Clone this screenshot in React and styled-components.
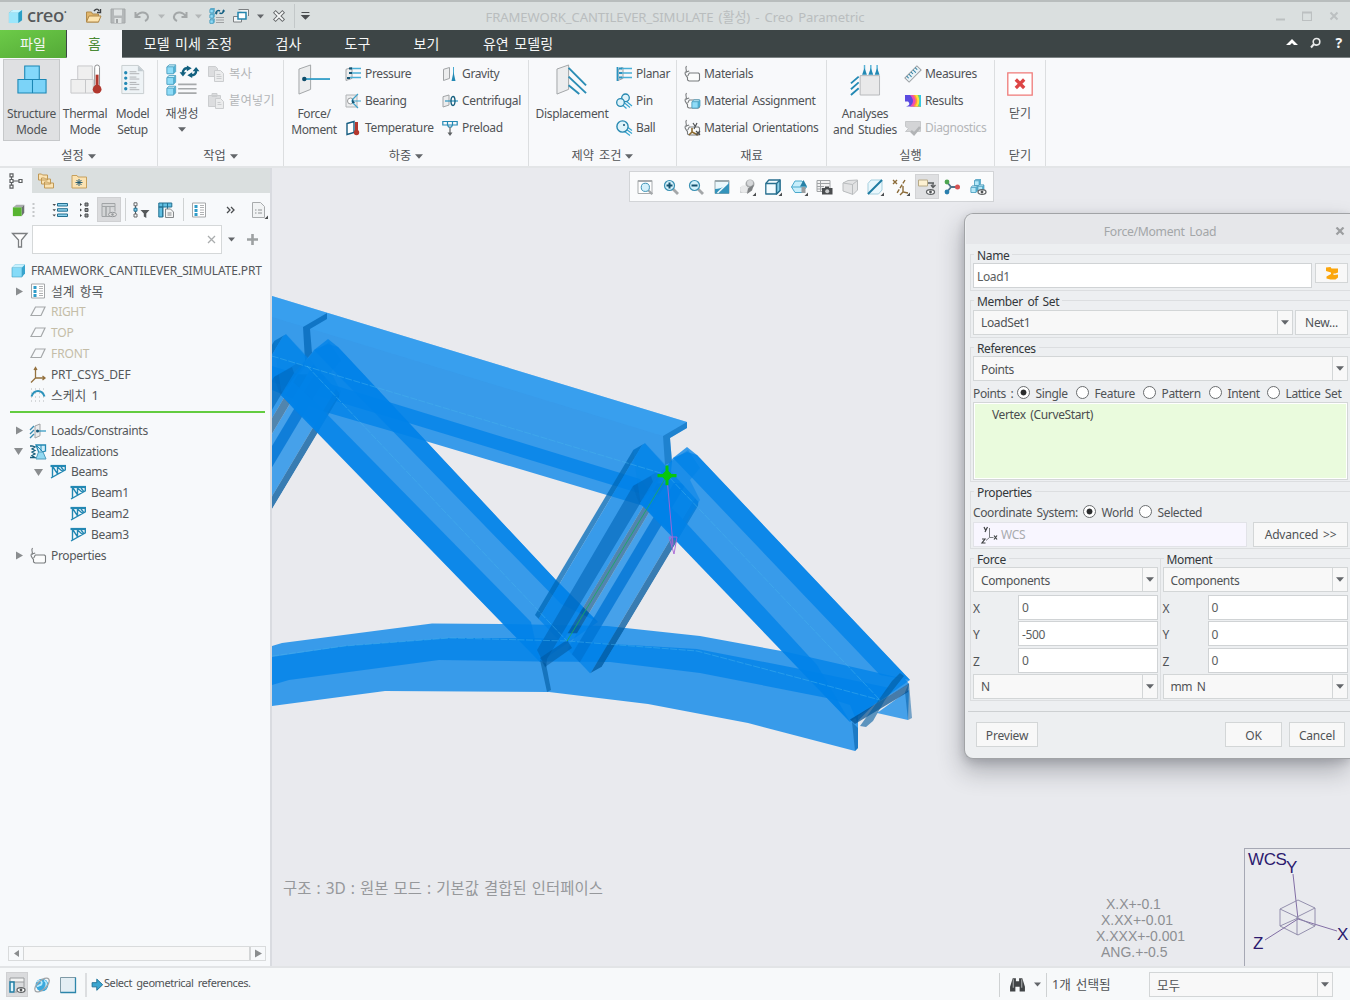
import React from "react";
import styled, { createGlobalStyle, css } from "styled-components";

const Global = createGlobalStyle`
  * { box-sizing: border-box; }
  body { margin: 0; overflow: hidden; background: #f8f9fb; }
  #root {
    font-family: "Noto Sans", "Noto Sans CJK KR", sans-serif;
    font-size: 12px; line-height: 16px; letter-spacing: -0.36px; word-spacing: 1.8px; color: #505356;
    white-space: nowrap;
  }
`;

const Window = styled.div`
  width: 1350px; height: 1000px; overflow: hidden;
  display: flex; flex-direction: column;
`;

/* ---------- title bar ---------- */
const TitleBar = styled.header`
  height: 30px; flex: none; background: #dadfdf; border-top: 2px solid #b8bdbd;
  display: grid; grid-template-columns: 320px 710px 1fr; align-items: center;
`;
const QuickAccess = styled.div`display: flex; align-items: center; padding-left: 8px; height: 28px;`;
const Brand = styled.span`
  font-family: "Noto Sans", sans-serif; font-size: 18.5px; line-height: 24px; letter-spacing: -0.4px; color: #55585a;
  font-weight: 500; width: 57px; margin-left: 4px; display: flex; margin-top: -3px;
`;
const Reg = styled.span`font-size: 7px; line-height: 20px;`;
const TitleText = styled.div`text-align: center; color: #b9bdbe; font-size: 13.1px; letter-spacing: -0.08px; padding-top: 2px;`;
const WindowButtons = styled.div`display: flex; justify-content: flex-end; gap: 17px; padding-right: 11px;`;
const Slot = styled.span`display: flex; flex: none; width: ${p => p.$w}px; justify-content: ${p => p.$start ? "flex-start" : "center"}; align-items: center;`;

/* ---------- tabs ---------- */
const TabBar = styled.nav`
  height: 28px; flex: none; background: #3d4546; border-bottom: 1px solid #7d8384;
  display: flex; color: #f6f7f7; font-size: 14px; letter-spacing: 0.1px; word-spacing: 1.6px;
`;
const Tab = styled.div`
  width: ${p => p.$w}px; display: flex; align-items: center; justify-content: center; height: 28px;
  ${p => p.$kind === "file" && css`background: linear-gradient(160deg, #6ccb48, #54a937); margin-right: 1px;`}
  ${p => p.$kind === "active" && css`background: #f8f9fb; color: #4b8a36;`}
`;
const TabTools = styled.div`margin-left: auto; display: flex; gap: 11px; align-items: center; padding-right: 5px; height: 26px;`;

/* ---------- ribbon ---------- */
const Ribbon = styled.section`
  height: 110px; flex: none; background: #f8f9fb; border-bottom: 2px solid #e3e5e7; display: flex;
`;
const Group = styled.div`
  width: ${p => p.$w}px; margin: 2px 0 1px; height: 106px;
  border-right: 1px solid #dcdee0; display: flex; flex-direction: column;
`;
const GroupBody = styled.div`display: flex; height: 87px; padding-left: ${p => p.$pad}px; margin-top: -1px;`;
const GroupLabel = styled.div`
  font-size: 12.200px; display: flex; justify-content: center; align-items: center; gap: 4px; height: 20px; letter-spacing: 0;
`;
const Big = styled.div`
  width: ${p => p.$w}px; height: 82px; padding-top: ${p => p.$top || 4}px; flex: none;
  display: flex; flex-direction: column; align-items: center; text-align: center;
  border: 1px solid transparent; margin-right: ${p => p.$mr || 0}px;
  ${p => p.$active && css`background: #dfe0e2; border-color: #c6c8ca;`}
`;
const BigLabel = styled.div`
  margin-top: ${p => p.$ko ? 11 : 9.6}px; letter-spacing: ${p => p.$ko ? "0" : "-0.36px"}; line-height: ${p => p.$ko ? 14 : 16}px;
`;
const SmallCol = styled.div`display: flex; flex-direction: column; width: ${p => p.$w}px; flex: none;`;
const Small = styled.div`
  height: 27.2px; display: flex; align-items: center; gap: ${p => p.$ko ? 5 : 4}px; padding-top: 2px;
  color: ${p => p.$off ? "#b4b6b8" : "#505356"}; font-size: ${p => p.$ko ? 12.4 : 12}px; letter-spacing: ${p => p.$ko ? 0 : -0.36}px;
`;

/* ---------- workspace ---------- */
const Workspace = styled.main`display: flex; flex: none; height: 798px;`;
const Side = styled.aside`
  width: 272px; flex: none; background: #f7f9fb; border-right: 2px solid #d9dbe0;
  display: flex; flex-direction: column;
`;
const SideTabs = styled.div`height: 25px; display: flex; background: #dadfdf;`;
const SideTab = styled.div`
  width: ${p => p.$w || 32}px; height: 26px; display: flex; align-items: center; justify-content: center;
  background: ${p => p.$active ? "#f7f9fb" : "transparent"};
`;
const SideTools = styled.div`height: 32px; padding: 1px 8px 0 11px; display: flex; align-items: center;`;
const Pressed = styled.span`
  display: flex; align-items: center; justify-content: center; width: ${p => p.$w || 24}px; height: 25px; background: #dadbdd;
  border: 1px solid #cfd0d2; flex: none;
`;
const VLine = styled.span`width: ${p => p.$t || 1}px; height: ${p => p.$h}px; background: ${p => p.$c || "#cfd2d3"}; flex: none; margin: 0 ${p => p.$m || 0}px;`;
const FilterRow = styled.div`height: 29px; padding-left: 11px; display: flex; align-items: center;`;
const FilterInput = styled.div`
  width: 190px; height: 29px; margin: 0 6px 0 4px; background: #fff; border: 1px solid #d5d8d9;
  display: flex; align-items: center; justify-content: flex-end; padding-right: 5px;
`;
const Tree = styled.div`padding-top: 6.2px; flex: 1;`;
const Row = styled.div`
  height: 20.8px; display: flex; align-items: center; padding-left: ${p => p.$x}px;
  color: ${p => p.$dim ? "#c4bda8" : "#54575a"};
  font-size: ${p => p.$ko ? 12.8 : 12}px; letter-spacing: ${p => p.$ko ? 0 : p.$ls || -0.32}px;
`;
const Insert = styled.div`height: 3px; margin: 5.4px 5px 6.200px 10px; background: #63cc40; border: solid #f7f9fb; border-width: 0 0 1px; flex: none;`;
const HScroll = styled.div`display: flex; height: 15px; margin: 0 4px 5px 8px; border: 1px solid #d9dbdc;`;
const ScrollBtn = styled.div`width: 14px; display: flex; align-items: center; justify-content: center;`;
const Thumb = styled.div`flex: 1; background: #f8f8f8; border: solid #d3d5d6; border-width: 0 2px 0 1px;`;

const Canvas = styled.section`
  position: relative; flex: 1; overflow: hidden; background: #e9eaee;
`;
const Scene = styled.svg`position: absolute; left: 0; top: 0;`;
const ViewBar = styled.div`
  position: absolute; left: 357px; top: 3px; width: 365px; height: 31px; background: #fafbfc;
  border: 1px solid #d2d4d7; display: flex; align-items: center; padding-left: 3px;
`;
const ViewBtn = styled.span`
  width: 24px; height: 25px; margin-right: 1.62px; flex: none; display: flex; align-items: center; justify-content: center;
  ${p => p.$active && css`background: #dfe0e2; border: 1px solid #d2d3d5;`}
`;
const ModeText = styled.div`position: absolute; left: 11px; top: 711px; font-size: 15.4px; line-height: 20px; color: #96989b; letter-spacing: 0.12px; word-spacing: 0.8px;`;
const Tolerance = styled.div`
  position: absolute; left: 824px; top: 728px; display: flex; flex-direction: column;
  font: 14px/16px "Liberation Sans", sans-serif; letter-spacing: 0; color: #8d8f93;
`;
const ToleranceRow = styled.span`padding-left: ${p => p.$pad}px;`;
const Compass = styled.div`
  position: absolute; right: 0; bottom: 0; width: 106px; height: 118px; border: solid #a6a8b4; border-width: 1px 0 0 1px;
`;

/* ---------- dialog ---------- */
const Dialog = styled.div`
  position: absolute; left: 692px; top: 45px; width: 386px; height: 546px; background: #edeff1;
  border: 1px solid #a1a3a6; border-right: 0; border-radius: 9px 0 0 9px; display: flex; flex-direction: column;
  box-shadow: -2px 12px 24px rgba(30,34,44,.3), 0 3px 8px rgba(30,34,44,.16);
`;
const DialogTitle = styled.div`
  height: 30px; padding: 5px 3px 0 19px; background: #e6e7ea; border-top-left-radius: 8px; color: #a3a6a8; font-size: 12.2px; letter-spacing: -0.3px;
  display: grid; grid-template-columns: 1fr 12px; align-items: center; text-align: center; margin: 0 0 3px 1px;
`;
const Section = styled.fieldset`
  margin: 0 0 2px ${p => p.$ml ?? 5}px; padding: 2px 2px 0; height: ${p => p.$h}px; width: ${p => p.$w || "auto"}; min-width: 0;
  border: 1px solid #dcdee0; border-right: ${p => p.$r ? "1px solid #cfd1d3" : 0};
  legend { line-height: 14px; height: 14px; padding: 2px 3px 0; margin-left: 1px; color: #33373a; }
`;
const Line = styled.div`display: flex; align-items: ${p => p.$a || "center"}; height: ${p => p.$h}px; gap: ${p => p.$gap || 0}px; padding-top: ${p => p.$pt || 0}px;`;
const Input = styled.div`
  width: ${p => p.$w}px; height: 25px; background: ${p => p.$wcs ? "#f8f6ff" : "#fff"}; flex: none;
  border: 1px solid ${p => p.$wcs ? "#e2e3e8" : "#d0d3d5"}; display: flex; align-items: center; padding: 2px 0 0 3px;
  color: ${p => p.$wcs ? "#a8abae" : "#5b5e60"};
`;
const ComboBox = styled.div`
  width: ${p => p.$w}px; height: 25px; background: #f8f8f8; border: 1px solid #d3d6d7; display: flex; align-items: center; flex: none;
  & > span { flex: 1; padding: 2px 0 0 7px; }
  & > i { width: 15px; height: 23px; border-left: 1px solid #d3d6d7; display: flex; align-items: center; justify-content: center; }
`;
const Combo = ({ w, children }) => <ComboBox $w={w}><span>{children}</span><i><Caret /></i></ComboBox>;
const Button = styled.div`
  width: ${p => p.$w}px; height: ${p => p.$h || 25}px; background: #f8f8f8; border: 1px solid #d3d6d7; flex: none;
  display: flex; align-items: center; justify-content: center; letter-spacing: -0.2px; padding-top: ${p => p.$h ? 0 : 2}px;
`;
const Radio = styled.span`
  width: 13px; height: 13px; border-radius: 50%; border: 1px solid #6a6d6f; flex: none; margin-top: -3px;
  background: ${p => p.$on ? "radial-gradient(circle, #2b2d2e 0 2.6px, #fff 3.3px)" : "#fff"};
`;
const RadioText = styled.span`width: ${p => p.$w}px; padding-left: 6px; flex: none;`;
const Label = styled.span`width: ${p => p.$w}px; flex: none;`;
const List = styled.div`
  width: 375px; height: 78px; background: #eafbdd; border: 1px solid #d3d6d7; outline: 1px solid #fff; outline-offset: -2px;
  padding: 4px 0 0 18px; color: #4a4d4f;
`;
const Two = styled.div`display: flex;`;
const AxisName = styled.span`width: 45px; flex: none; padding-top: 3px;`;
const Footer = styled.div`
  border-top: 1px solid #cdd0d2; margin: 8px 0 0 3px; padding: 10px 5px 0 8px; display: flex; gap: 7px;
  & > :first-child { margin-right: auto; }
`;

/* ---------- status bar ---------- */
const Status = styled.footer`
  height: 34px; flex: none; background: #f7f9fa; border-top: 2px solid #e2e4e6; display: flex; align-items: center; padding: 1px 0 0 6px;
`;
const StatusMsg = styled.span`width: 893px; margin-bottom: 3px; font-size: 11px; letter-spacing: -0.42px; word-spacing: 1.8px;`;
const KoText = styled.span`font-size: 12.6px; letter-spacing: 0; width: ${p => p.$w}px; padding-left: ${p => p.$pad || 0}px;`;

/* ---------- drawings ---------- */
const Caret = ({ c = "#63666a", w = 8 }) => <svg width={w} height="5" viewBox="0 0 8 5"><path d="M0 .3h8L4 4.7z" fill={c} /></svg>;
const Tri = ({ open, left }) => (
  <svg width="9" height="9" viewBox="0 0 9 9"><path fill="#8a8d8f" d={open ? "M0 1h9L4.500 8z" : left ? "M7 1v7L2 4.500z" : "M1 .5v8l7-4z"} /></svg>
);
const plate = (x, y, w, h) => <path d={`M${x} ${y + h * .14}L${x + w} ${y}V${y + h * .84}L${x} ${y + h}z`} fill="#ecedee" stroke="#a1a4a6" />;
const cube = (x, y, s, f = "#8fdcf8", t = "#d4f4fd", st = "#4a9ebf") => (
  <g stroke={st} strokeLinejoin="round" strokeWidth=".7">
    <path d={`M${x} ${y + s * .22}l${s * .24} ${-s * .22}h${s * .76}v${s * .76}l${-s * .24} ${s * .24}h${-s * .76}z`} fill="#4fb4d8" />
    <path d={`M${x} ${y + s * .22}l${s * .24} ${-s * .22}h${s * .76}l${-s * .24} ${s * .22}z`} fill={t} />
    <path d={`M${x} ${y + s * .22}h${s * .76}v${s * .78}h${-s * .76}z`} fill={f} />
  </g>
);
const truss = <g fill="none" stroke="#2388b3"><path d="M.5 2h15.500" strokeWidth="2.200" /><path d="M2.500 2v11M15.300 2v3.800L1 14M3 3l4.500 6.800M7.500 10V3l5 4.500M11 3l2.500 3" strokeWidth="1.400" /></g>;
const sheet = <g><path d="M1.500 1h13v14h-13z" fill="#fff" stroke="#a4a7a9" /><path d="M3.500 3h3v3h-3zM3.500 7h3v3h-3zM3.500 11h3v3h-3z" fill="#2f9cc9" /><path d="M9 3.500h4M9 5.500h4M9 8h4M9 10.500h4M9 12.500h4" stroke="#b0b2b4" /></g>;
const lens = (s) => <g><path d="M10 10l5 5" stroke="#a4a7a9" strokeWidth="2.800" /><circle cx="6.500" cy="6.500" r="5" fill="#d4f1fb" stroke="#3990b3" strokeWidth="1.200" />{s && <path d={s} stroke="#14516e" strokeWidth="2" />}</g>;
const tag = <g fill="none" stroke="#797c7e" strokeWidth="1.100"><path d="M2.500 0C.5 3 3.500 3.500 2 6.500" /><path d="M.7 6.500l4.500-1.500" /><path d="M1 7c0 2 1.500 3 2.500 4.500v2.500l1.500 1h9.500l1-1V8l-1-1H5.500C4.500 7.500 5 9 3.500 10" fill="#fbfcfc" /></g>;
const eye = (x, y) => <g><ellipse cx={x} cy={y} rx="4" ry="2.400" fill="#fff" stroke="#606365" strokeWidth="1.300" /><circle cx={x} cy={y} r="1.400" fill="#505355" /></g>;
const flags = <g stroke="#49afd6" strokeWidth="1.300"><path d="M5 2.500h11M5 7h11M5 11.500h11" /></g>;
const corner = <path d="M17 13.500v3.500h-3.500z" fill="#4a4d4f" stroke="none" />;

const art = {
  logo: <g><path d="M1 4l4-3h10v11l-4 3H1z" fill="#2b9fc6" /><path d="M1 4h10v11H1z" fill="#9be6fb" /><path d="M1 4l4-3h10l-4 3z" fill="#c8f4ff" /></g>,
  folder: <g><path d="M1.500 14V4h5l1 2h6v8z" fill="#e1b66b" stroke="#b0894a" /><path d="M1.500 14L4 8h12l-2.500 6z" fill="#fde4ae" stroke="#b0894a" /><path d="M9 3c2-2.500 4-2.500 5 0m1.500-2v3.500H12" fill="none" stroke="#3e4143" strokeWidth="1.400" /></g>,
  save: <g><path d="M1 1h14v14H1z" fill="#b4b8b9" stroke="#a4a8a9" /><path d="M4 1.500h8v6H4z" fill="#dfe3e3" /><path d="M4.500 10h7v5h-7z" fill="#dfe3e3" /><path d="M6 11h2v4H6z" fill="#a0a4a5" /></g>,
  undo: <path d="M1.500 4v5h5M2 8.500C5 4 11 3 13.500 7c1.500 3-.5 5-2.500 6" fill="none" stroke="#a3a7a8" strokeWidth="2" />,
  redo: <path d="M14.500 4v5h-5M14 8.500C11 4 5 3 2.500 7 1 10 3 12 5 13" fill="none" stroke="#a3a7a8" strokeWidth="2" />,
  regen: <g>{cube(1, .5, 4.300)}{cube(1, 5.700, 4.300)}{cube(1, 11, 4.300)}<path d="M7 5.500c0-2.500 2-3.500 4-2.500M14.500 2.500c0 2.500-2 3.500-4 2.500" fill="none" stroke="#125f82" strokeWidth="1.500" /><path d="M5.500 4.500h3.500l-1.700 2.200zM13 3.500h3.200L14.700 1.200z" fill="#125f82" /><path d="M7 9.500h8M7 12h8M7 14.500h8" stroke="#9da0a2" strokeWidth="1.200" /></g>,
  windows: <g fill="#f2f5f6" stroke="#7d8082"><path d="M.5 8.500h8v5.500h-8zM5.500 1.500h10V8" /><path d="M5 4.500h8v6.500H5z" fill="#fff" stroke="#2386ae" strokeWidth="1.500" /></g>,
  closeWin: <g fill="none"><path d="M3.500 3.500l9 9M12.500 3.500l-9 9" stroke="#66696b" strokeWidth="5" strokeLinecap="square" /><path d="M3.500 3.500l9 9M12.500 3.500l-9 9" stroke="#f6f8f8" strokeWidth="2.600" strokeLinecap="square" /></g>,
  more: <path d="M4 4h9M4.500 7.500h8l-4 4z" stroke="#4a4d4f" fill="#4a4d4f" strokeWidth="1.200" />,
  structure: <g stroke="#1b86b4" strokeWidth="1.100"><path d="M9 2h15v14H9z" fill="#83d8fa" /><path d="M2 16h15v14H2zM17 16h14v14H17z" fill="#7bd3f8" /></g>,
  thermal: <g><path d="M9 2h15v14H9zM2 16h15v14H2zM17 16h8v14h-8z" fill="#efefef" stroke="#c6c7c9" /><rect x="26.500" y="1" width="5" height="23" rx="2.500" fill="#fff" stroke="#8b8d8f" /><path d="M27.500 11h3v13h-3z" fill="#b1372d" /><circle cx="29" cy="26" r="4.500" fill="#b1372d" /></g>,
  setup: <g><path d="M5 1.500h17l5.500 5.500v23.500H5z" fill="#eef3f6" stroke="#c8cdd0" /><path d="M21.500 1.500v6h6" fill="#c2cbd0" />{[8, 13.500, 19, 24.500].map(y => <g key={y}><circle cx="9" cy={y + 1} r="1.700" fill="#2389b5" /><path d={`M13 ${y}h7M13 ${y + 2}h10`} stroke="#adb1b4" /></g>)}</g>,
  regenBig: <g>{cube(1, 1, 9)}{cube(1, 12, 9)}{cube(1, 23, 9)}<path d="M17.500 10c-.5-4 2-6 5-5.500M31 6c.5 4-2 6-5 5.500" fill="none" stroke="#12607f" strokeWidth="2.400" /><path d="M14 8.500h7l-3.500 4.500zM27.500 7.500h7L31 3zM21.500 1.500l5 3-5 3zM27 8.500l-5 3 5 3z" fill="#12607f" /><path d="M12.500 21h19M12.500 25.500h19M12.500 30h19" stroke="#a6a9ab" strokeWidth="1.700" /></g>,
  copy: <g fill="#dcdddf" stroke="#cbcdcf"><path d="M.5.500h7l2 2v8h-9z" /><path d="M6.500 4.500h6l3 3v8h-9z" fill="#ebeced" /><path d="M8.500 8.500h4M8.500 10.500h5M8.500 12.500h5" /></g>,
  paste: <g fill="#dcdddf" stroke="#cbcdcf"><path d="M.5 2.500h12v11H.5zM4 .5h5v3H4z" /><path d="M7.500 5.500h5l3 3v7h-8z" fill="#ebeced" /><path d="M9.500 9.500h3M9.500 11.500h4" /></g>,
  force: <g>{plate(1, 1, 12, 30)}<path d="M6 15.500h27" stroke="#2c9bc6" strokeWidth="1.800" /><circle cx="6.500" cy="15.500" r="2.300" fill="#0f4d6b" /></g>,
  pressure: <g>{plate(1, 1.500, 6, 13)}{flags}<path d="M4 2.500h3M4 7h3M2 12h3" stroke="#155574" strokeWidth="2.200" /></g>,
  bearing: <g><path d="M1 2h11v12H1z" fill="#ecedee" stroke="#b1b4b6" /><circle cx="5.500" cy="8" r="3" fill="#fff" stroke="#97999b" /><path d="M6 8h10M7 7l6-6M7 9l6 6" stroke="#3fa3cb" strokeWidth="1.200" /><path d="M7 6v4h3z" fill="#155574" /></g>,
  temperature: <g><path d="M2 3.500l7-2v11l-7 2z" fill="#fff" stroke="#175e82" strokeWidth="1.400" /><path d="M10 2h3v10h-3z" fill="#b4382e" /><circle cx="11.500" cy="12.500" r="2.700" fill="#b4382e" /></g>,
  gravity: <g>{plate(1.500, 1.500, 6, 13)}<path d="M11.500 1v12" stroke="#46aad0" /><path d="M9.500 15l2-9 2 9z" fill="#2389b4" /></g>,
  centrifugal: <g>{plate(1, 2, 6, 12)}<path d="M3 8h13" stroke="#2994c0" strokeWidth="1.200" /><ellipse cx="11" cy="8" rx="2" ry="4.500" fill="none" stroke="#17607f" strokeWidth="1.400" /></g>,
  preload: <g fill="none" stroke="#2389b4" strokeWidth="1.200"><path d="M.8 1.500h14.400v3.500H.8zM5.500 1.500V5M10.500 1.500V5M5.500 5l1 2h3l1-2" /><path d="M8 7v7" stroke="#5e6163" /><path d="M5.500 12.500h5L8 16z" fill="#5e6163" stroke="none" /></g>,
  displacement: <g>{plate(1, 1, 12, 30)}<path d="M13 4l18 18M13 13l18 17M13 22l11 9" stroke="#2b8db5" strokeWidth="2" /></g>,
  planar: <g>{plate(2, 1.500, 5, 13)}{flags}<path d="M1.500 1v14M3 2.500h3M3 7h3M3 11.500h3" stroke="#2a93c0" strokeWidth="1.800" /></g>,
  pin: <g><path d="M8 9.500l6 5M10 8l6 5M6.500 12l4 3.500" stroke="#37a5d0" strokeWidth="1.200" /><circle cx="9.500" cy="4.800" r="3.800" fill="#dff3fa" stroke="#2789b1" strokeWidth="1.300" /><circle cx="4.500" cy="9.500" r="3.800" fill="#dff3fa" stroke="#2789b1" strokeWidth="1.300" /></g>,
  ball: <g><path d="M8 11l6 4.500M10.500 9.500l5.500 4M12 7.500l4 3" stroke="#37a5d0" strokeWidth="1.200" /><circle cx="6.500" cy="6.500" r="5.600" fill="#dff3fa" stroke="#2789b1" strokeWidth="1.400" /><circle cx="8" cy="5" r="1" fill="#155574" /></g>,
  tag,
  tagAssign: <g>{tag}{cube(8, 7, 8)}</g>,
  tagOrient: <g>{tag}<path d="M8 8v4l-3 3M8 12l6 3" fill="none" stroke="#8c6a2f" strokeWidth="1.600" /><path d="M9 3l2 3M13 3l-3 6M12 11l4 4M16 11l-4 4" stroke="#4e5153" strokeWidth="1.200" /></g>,
  analyses: <g><path d="M11.500 12h20v20h-20z" fill="#e9e9ea" stroke="#b6b8ba" /><path d="M16 1v9M22.500 1v9M29 1v9" stroke="#58b2d5" strokeWidth="1.500" /><path d="M13.500 11l2.500-7 2.500 7zM20 11l2.500-7 2.500 7zM26.500 11l2.500-7 2.500 7z" fill="#2389b4" /><path d="M2 20l8-7M2 26l8-7M2 32l8-7" stroke="#2389b4" strokeWidth="1.900" /></g>,
  measures: <g transform="rotate(-45 8 8)"><path d="M-.5 5h17v6h-17z" fill="#e9f2f6" stroke="#9a9ea1" /><path d="M2 5v3M5 5v4M8 5v3M11 5v4M14 5v3" stroke="#2c7fa3" /></g>,
  results: <g><path d="M0 2h16v11.500H10l-3 0H1c4-1 4-3 2-5H0z" fill="#5b4be0" /><path d="M5 2h11v11.500H5c4-4 4-7 0-11.500" fill="#f04fb0" /><path d="M8 2h8v11.500H8c3.500-4 3.500-7 0-11.500" fill="#ff9a3a" /><path d="M10 2h6v11.500h-6c3-4 3-7 0-11.500" fill="#ffe23a" /><path d="M12.500 2H16v11.500h-3.500c2.500-4 2.500-7 0-11.500" fill="#62dc6a" /><path d="M14.500 2H16v11.500h-1.500z" fill="#35c7e8" /></g>,
  diagnostics: <g fill="#d3d4d6" stroke="#c6c8ca"><path d="M.5 1.500h15v10H.5l3-3-3-2z" /><path d="M6 11l3 3 6-7" fill="none" stroke="#b2b4b6" strokeWidth="2.600" /></g>,
  closeRed: <g><path d="M.8.800h24.400v22.400H.8z" fill="#fff" stroke="#ef7a78" strokeWidth="1.300" /><path d="M8.800 7.500l8.400 8.500M17.200 7.500l-8.400 8.500" stroke="#dd4545" strokeWidth="3.300" /></g>,
  tree: <g fill="#fff" stroke="#5c5f61" strokeWidth="1.200"><path d="M3.500 2v12M3.500 8h8" /><path d="M2 .8h3v3H2zM2 6.500h3v3H2zM2 12.200h3v3H2zM11 6.500h3v3h-3z" /></g>,
  folders: <g fill="#fbe3b3" stroke="#c09855"><path d="M-.5 1h3l1 1h5v5h-9zM2.500 5h3l1 1h5v5h-9zM5.500 9h3l1 1h5v5h-9z" /></g>,
  favs: <g><path d="M1 2.500h5l1 1.500h8.500v11H1z" fill="#fbe3b3" stroke="#c7a05c" /><path d="M8 6v7M4.500 9.500h7M5.500 7l5 5M10.500 7l-5 5" stroke="#17546f" strokeWidth=".9" /></g>,
  green: <g><path d="M1 5l4-3h9l-3 3z" fill="#a9acad" /><path d="M11 5l3-3v9l-3 4z" fill="#6d7072" /><path d="M1 5h10v10H1z" fill="#58b531" /></g>,
  listA: <g><path d="M5.500 1.500h10v2.500h-10zM5.500 6.700h10v2.500h-10zM5.500 12h10v2.500h-10z" fill="#8fd3ec" stroke="#236f90" /><path d="M.5 2H4L2.200 4zM.5 7.200H4L2.200 9.200zM.5 12.500H4l-1.800 2z" fill="#4a4d4f" /></g>,
  listB: <g fill="#8f9294" stroke="#4d5052"><path d="M5 1h3v3H5zM5 6.500h3v3H5zM5 12h3v3H5z" /><path d="M0 1v3l2-1.500zM0 6.500v3L2 8zM0 12v3l2-1.500z" fill="#3d4042" stroke="none" /></g>,
  columns: <g><path d="M1 1.500h13v3H1zM1 4.500h4v10H1zM5 4.500h4v10H5zM9 4.500h5v5" fill="#d3d5d6" stroke="#a1a4a6" /><ellipse cx="11.500" cy="12.500" rx="4" ry="2.200" fill="#ddd" stroke="#94979a" /><circle cx="11.500" cy="12.500" r="1.200" fill="#94979a" /></g>,
  treeFilter: <g><path d="M2.500 2v12" stroke="#55585a" /><path d="M1 .8h3v3H1zM1 12h3v3H1z" fill="#fff" stroke="#66696b" /><path d="M1 6.200h3v3H1z" fill="#7dcdea" stroke="#236f90" /><path d="M7.500 8h9l-3.200 3.500v4.500l-2.500-1.500v-3z" fill="#55585a" /></g>,
  colSheet: <g><path d="M.8 1h13v4h-13zM.8 5h4v10h-4z" fill="#61bfe2" stroke="#236f90" /><path d="M4.800 1v14M9.500 1v6" stroke="#236f90" /><path d="M7.500 7h5l3 3v5.500h-8z" fill="#f4f5f5" stroke="#85888a" /><path d="M9.500 11h4M9.500 13h4" stroke="#85888a" /></g>,
  sheet,
  report: <g><path d="M1.500.500h8l4 4v11h-12z" fill="#f1f3f4" stroke="#a8abad" /><path d="M4 8h1.500M4 11h1.500M7 8h4M7 11h4" stroke="#8f9294" />{corner}</g>,
  funnel: <path d="M1 1.500h14.500L10 8v7H7V8z" fill="#fdfdfd" stroke="#7b7e80" strokeWidth="1.300" />,
  part: <g><path d="M2 4.500l3-3h10v9l-3 3.500H2z" fill="#38a5cf" /><path d="M2 4.500h10V14H2z" fill="#85dbf8" stroke="#3f9dc1" strokeWidth=".6" /><path d="M2 4.500l3-3h10l-3 3z" fill="#c6f1fe" /></g>,
  plane: <path d="M5.500 3h9.500l-4 8.500H1z" fill="none" stroke="#a5a8aa" strokeWidth="1.200" />,
  csys: <g fill="none" stroke="#94713e" strokeWidth="1.300"><path d="M5.500 1v10h9M5.500 11L1 15.500M12.500 9l2.500 2-2.500 2M4 3L5.500.5 7 3" /></g>,
  sketch: <g><path d="M1 2h15M1 6h15M1 10h15M1 14h15" stroke="#b3b6b8" strokeDasharray="1 3" /><path d="M1.500 9.500C4 2 12 2 14.500 9.500" fill="none" stroke="#2c93bc" strokeWidth="2" /></g>,
  loads: <g>{plate(5, 1, 5, 14)}<path d="M7 8h9" stroke="#2994c0" strokeWidth="1.200" /><circle cx="7.500" cy="8" r="1.500" fill="#155574" /><path d="M0 7l4-4M0 11l4-4M0 15l4-4" stroke="#3a8cb0" strokeWidth="1.400" /></g>,
  ideal: <g><path d="M6 1h9.500v6L9 9z" fill="#cfeefa" stroke="#2388b3" strokeWidth="1.300" /><path d="M6 1l7 7M11 1v6" stroke="#2388b3" /><path d="M0 2h2l3 1-3 2 3 1.500L2 8l3 2-3 1.500 3 2H0" fill="none" stroke="#17607f" strokeWidth="1.300" /><path d="M8.500 8h4.500l3 7H6z" fill="#92d9f2" stroke="#4f9cbc" /></g>,
  truss,
  zoomFit: <g><path d="M1 1.500h14v13H1z" fill="#fff" stroke="#a7abad" /><path d="M1 2h14" stroke="#a7abad" strokeWidth="2" /><g transform="translate(3 3) scale(.82)">{lens()}</g></g>,
  zoomIn: lens("M3.500 6.500h6M6.500 3.500v6"),
  zoomOut: lens("M3.500 6.500h6"),
  repaint: <g><path d="M1 1.500h14v13H1z" fill="#e9f7fc" stroke="#9aa8ad" /><path d="M1 2h14" stroke="#9aa8ad" strokeWidth="2" /><path d="M15 3v11.500H1V10c8 0 11-4 14-7" fill="#3393bb" /><path d="M3.500 14L14 4" stroke="#eef9fd" strokeWidth="1.600" /></g>,
  shade: <g><circle cx="11" cy="5" r="4.500" fill="#a8abad" /><circle cx="11" cy="4" r="3" fill="#d6d8da" /><path d="M1 8h9v6H1z" fill="#cfd1d3" /><circle cx="5" cy="10" r="3.800" fill="#e8e9ea" /><path d="M9 9.500l6-4-2 6-5 3.500z" fill="#7e8183" />{corner}</g>,
  box: <g fill="#f2fbff" stroke="#276f8f" strokeWidth="1.300" strokeLinejoin="round"><path d="M.8 4.500l3-3.500H15v10.500L11.500 15H.8z" /><path d="M11.500 4.500L15 1v10.500L11.500 15z" fill="#8bcfe8" /><path d="M.8 4.500h10.700V15" fill="none" />{corner}</g>,
  orient: <g><path d="M4 2h7l4.500 6-4.500 5.500H4L.5 8z" fill="#c7eefb" stroke="#4ba9cc" /><path d="M.5 8h15" stroke="#4ba9cc" /><path d="M9 7.500L12.500 1 16 7.500z" fill="#2681a6" /><path d="M10.500 8h4v6h-4z" fill="#9a9d9f" />{corner}</g>,
  viewMgr: <g><path d="M1 1.500h13v11H1z" fill="#f3f3f3" stroke="#a0a3a5" /><path d="M1 4.500h13M1 7.500h7M1 10h5M4.500 1.500v11" stroke="#a0a3a5" /><path d="M6 9h10.500v6.500H6zM9 7.500h4V9H9z" fill="#4a4d4f" /><circle cx="11.200" cy="12.200" r="2" fill="#c9cbcc" /></g>,
  persp: <g fill="#e2e3e4" stroke="#b9bcbe"><path d="M1 4l5-2.500 9.500-.5v10L11 15.500 1 12z" /><path d="M1 4l9.500 1.500V15M10.500 5.500l5-4" /></g>,
  section: <g><path d="M1 4.500L4 1h11v10l-3.500 4H1z" fill="#e9f7fc" stroke="#a5cfde" /><path d="M1 15L15 1" stroke="#1e7ba1" strokeWidth="1.900" />{corner}</g>,
  datum: <g stroke="#8b6b39" strokeWidth="1.400" fill="none"><path d="M0 1l4 4M4 1L0 5" /><path d="M12 1L4 14" strokeDasharray="4 1.500" /><path d="M10 7v6l5 1M10 13l-3 3" />{corner}</g>,
  anno: <g><path d="M-.5 1h9v6h-9z" fill="#fdf1d2" stroke="#b8ab88" /><path d="M9 4h5v4M12 4l3 0M12 6l2 2.500L16.500 6" stroke="#5a5d5f" fill="none" strokeWidth="1.300" />{eye(11.500, 13)}</g>,
  spin: <g><path d="M3 3l4 5-4 5M7 8h6" stroke="#50748a" strokeWidth="1.800" fill="none" /><circle cx="3" cy="3" r="2.400" fill="#4da551" /><circle cx="3" cy="13" r="2.400" fill="#2a7fae" /><circle cx="13.500" cy="8" r="2.500" fill="#d65252" /></g>,
  simView: <g>{cube(4.500, .5, 6, "#b5e8f8", "#def6fd")}{cube(1, 7, 6.500, "#b5e8f8", "#def6fd")}{cube(8, 6, 6, "#b5e8f8", "#def6fd")}{eye(12, 13)}</g>,
  orange: <path d="M2 2.500l4.500-.5 1 1.500h6.500v4l-2.500 1h-2v1.500l4.500-.5v3l-2.500 2H6.500L2.500 13.500v-2L7 9V7.500L2 6z" fill="#fba60d" />,
  wcs: <g fill="none" stroke="#7a7d80"><path d="M8.500 1v9.500h4M8.500 10.500L5 13.500" /><path d="M3 0l1.500 3M6.500 0L4 5M13 8.500l3 4M16 8.500l-3 4M1 12h3L1 16h3.500" stroke="#3e4143" strokeWidth="1.200" /></g>,
  navPane: <g><path d="M1 1h14v4H1z" fill="#f2f3f3" stroke="#9a9d9f" /><path d="M1 5h4v10H1z" fill="#dff4fb" stroke="#1f7ea5" strokeWidth="1.500" /><path d="M5 15h3M15 5v5" stroke="#9a9d9f" />{eye(12, 13)}</g>,
  browser: <g><circle cx="8" cy="8" r="6.300" fill="#3aa9de" /><path d="M3.500 5c3-3 5 0 4 2s-4 1-4 3M10 3.500c3 1 3 5 1 7.500" fill="none" stroke="#b6e8fb" strokeWidth="1.800" /><ellipse cx="8" cy="8" rx="9" ry="4.300" transform="rotate(-42 8 8)" fill="none" stroke="#a0a4a7" strokeWidth="1.300" /></g>,
  blank: <g><path d="M.5.500h15v15H.5z" fill="#e3eef4" stroke="#7f9aa6" /><path d="M15.500.500v15H.5" stroke="#2c86ab" strokeWidth="1.300" fill="none" /></g>,
  arrow: <path d="M.7 5h5V1.200L12 7.200 5.700 13.200V9.500h-5z" fill="#3ba6d0" stroke="#1b6f94" />,
  binoc: <g fill="#414446"><path d="M3.500 2h3v3h3V2h3l2.500 8v4.500H10V10H6v4.500H1V10z" /><path d="M4 3v8M12 3v8" stroke="#a9acae" /></g>,
};
const I = ({ n, s = 16, w, h, v }) => <svg width={w || s} height={h || s} viewBox={v || "0 0 16 16"} overflow="visible">{art[n]}</svg>;
const BigI = ({ n }) => <svg width="32" height="32" viewBox="0 0 33 33" overflow="visible">{art[n]}</svg>;

/* Truss model: every face is a 76 % blue sheet, so overlaps darken on their own. */
const slant = (a, b, t, u) => {
  const at = (x, y) => `${530 + (x - (y - 450) * .596) / 3},${400 + y / 3}`;
  return `${at(a, t)} ${at(b, t)} ${at(b, u)} ${at(a, u)}`;
};
const Strut = () => (
  <g>
    <g clipPath="url(#strutOutline)">
      <polygon points={slant(125, 149, 100, 850)} fill="#0069b8" />
      <polygon points={slant(149, 262, 100, 850)} />
      <polygon points={slant(290, 402, 100, 850)} fillOpacity=".7" />
      <polygon points={slant(402, 425, 100, 850)} fill="#005a9f" />
      <polygon points={slant(312, 350, 250, 800)} fill="#0074d4" />
      <polygon points={slant(262, 290, 250, 700)} fill="#004f8c" fillOpacity=".65" />
    </g>
    <polygon points="633,486 651,476 653,482 547,659 546,668 537,650" fill="#0064b6" fillOpacity=".6" />
    <polygon points="633,486 655,473 666,474 640,505 637,498" fill="#0064b6" fillOpacity=".3" />
    <polygon points="633,450 645,443 667,466 698,502 677,538 640,500" fillOpacity=".25" />
  </g>
);
const Diagonal = ({ end }) => (
  <g>
    <polygon points={`673,458 687,447 697,455 ${end.r} ${end.b} 652,516 640,503`} />
    <polygon points={`652,490 677,513 ${end.l1} ${end.b} 640,503`} />
    <polygon points={`673,458 687,452 697,455 ${end.r} ${end.l2} 697,483`} />
    <polygon points="640,503 655,478 673,460 688,450 700,468 690,480 700,500 690,515 677,538" fillOpacity=".5" />
  </g>
);
const Model = () => (
  <g fill="#0082e8">
    <defs><clipPath id="strutOutline"><polygon points="633.3,450 645,443.3 698.3,501.7 698,507 601.7,666.7 590,673.3 535,615" /></clipPath></defs>
    <g fillOpacity=".76">
      {/* lower chord */}
      <polygon points="272,646 282,643 432,623.500 502,624 607,626 700,636 787,652 905,679 909,684 858,714 858,748 855,751 748,723 648,704 549,692 385,691 272,706" />
      <polygon points="272,657 345,646 449,638 539,638 612,644 697,649 800,669 890,688 857,722 850,705 827,698 700,673 610,662 539,661.500 439,660 289,680 272,685" />
      {/* upper chord */}
      <polygon points="272,296 687,422 687,428 670,438 672,462 667,512 647,507 432,443 322,411 272,390" />
      <polygon points="272,296 687,422 663,436 272,317" fill="#3aa5f5" fillOpacity=".4" />
      <polygon points="272,366 392,403 640,479 655,497 645,495 412,424 272,382" />
      <polygon points="687,422 687,428 670,438 672,462 665,465 663,436" fill="#0064b0" fillOpacity=".45" />
      <g transform="translate(-360 -109)"><polygon points="687,422 687,428 670,438 672,462 665,470 663,436" fill="#0064b4" fillOpacity=".7" /></g>
      <g transform="translate(-359 -109)"><Strut /></g>
      <g transform="translate(-359 -108)"><Diagonal end={{ r: "914,687 957,730", b: "899,770", l1: "890,730", l2: "920,712" }} /></g>
      <Strut />
      <Diagonal end={{ r: "910,680", b: "850,722", l1: "817,665", l2: "880,675" }} />
      {/* chord ends and joints */}
      <polygon points="877,713 909,690 908,720" fillOpacity=".7" />
      <polygon points="905,692 909,683 912,718 908,720" fill="#005a9f" fillOpacity=".5" />
      <polygon points="850,719.500 909,683.500 908,692 855,724" fill="#004c8c" fillOpacity=".7" />
      <polygon points="900,673 892,681 880,698 860,726 866,727 873,721 885,700 904,676" fill="#005a9f" fillOpacity=".6" />
      <polygon points="852,722 858,728 858,748 855,751" fill="#005a9f" fillOpacity=".5" />
      <polygon points="540,660 546,664 551,690 547,692" fill="#005a9f" fillOpacity=".6" />
      <polygon points="540,658 567,640 572,648 545,667" fill="#00539a" fillOpacity=".5" />
    </g>
    <path fill="none" stroke="#45b4ec" strokeWidth=".8" opacity=".6" strokeDasharray="7 1.500" d="M272 356L667 475L880 700M307 366L567 641M272 656L345 646L450 638L567 641L697 651L810 681L880 700" />
    <path d="M665 479L567 641" stroke="#1ba866" strokeWidth=".9" fill="none" />
    <path d="M667 478L673 545M669 537h8L674 554zM672 537v10" stroke="#a863d6" fill="none" strokeWidth=".9" />
    <path d="M657.500 474h5l3-3v-5.500h3v5.500l3 3h5v3.200h-5l-3 3v5h-3v-5l-3-3h-5z" fill="#06c70c" />
  </g>
);

const small = (n, t, off, ko) => <Small key={t} $off={off} $ko={ko}><I n={n} />{t}</Small>;

export default function App() {
  return (
    <Window>
      <Global />
      <TitleBar>
        <QuickAccess>
          <I n="logo" s={15} />
          <Brand>creo<Reg>•</Reg></Brand>
          <Slot $w={18}><I n="folder" /></Slot><Slot $w={32}><I n="save" /></Slot>
          <Slot $w={16}><I n="undo" /></Slot><Slot $w={22}><Caret c="#b3b7b8" w={7} /></Slot>
          <Slot $w={16}><I n="redo" /></Slot><Slot $w={20}><Caret c="#b3b7b8" w={7} /></Slot>
          <Slot $w={18}><I n="regen" /></Slot><Slot $w={30}><I n="windows" /></Slot>
          <Slot $w={8}><Caret w={7} /></Slot><Slot $w={30}><I n="closeWin" s={12} /></Slot>
          <VLine $h={24} $c="#c3c8c9" /><Slot $w={20}><I n="more" s={14} /></Slot>
        </QuickAccess>
        <TitleText>FRAMEWORK_CANTILEVER_SIMULATE (활성) - Creo Parametric</TitleText>
        <WindowButtons>
          <svg width="10" height="10"><path d="M1 8.500h9" stroke="#bcc0c1" strokeWidth="2" /></svg>
          <svg width="10" height="10"><path d="M.5 1h9v8.500h-9z M0 2h10" stroke="#bcc0c1" fill="none" strokeWidth="1.200" /></svg>
          <svg width="10" height="10"><path d="M1.500 1.500l7 7M8.500 1.500l-7 7" stroke="#bcc0c1" strokeWidth="2" /></svg>
        </WindowButtons>
      </TitleBar>
      <TabBar>
        <Tab $w={66} $kind="file">파일</Tab><Tab $w={55} $kind="active">홈</Tab>
        <Tab $w={132}>모델 미세 조정</Tab><Tab $w={69}>검사</Tab><Tab $w={69}>도구</Tab><Tab $w={69}>보기</Tab><Tab $w={114}>유연 모델링</Tab>
        <TabTools>
          <svg width="12" height="8"><path d="M0 6L6 0l6 6H8L6 4 4 6z" fill="#fff" /></svg>
          <svg width="13" height="12"><circle cx="7.500" cy="4.800" r="3.300" fill="none" stroke="#e8eaea" strokeWidth="1.600" /><path d="M5 7L2 10.500" stroke="#e8eaea" strokeWidth="2" /></svg>
          <Slot $w={12}><b>?</b></Slot>
        </TabTools>
      </TabBar>
      <Ribbon>
        <Group $w={158}>
          <GroupBody $pad={3}>
            <Big $w={57} $active><BigI n="structure" /><BigLabel>Structure<br />Mode</BigLabel></Big>
            <Big $w={50}><BigI n="thermal" /><BigLabel>Thermal<br />Mode</BigLabel></Big>
            <Big $w={45}><BigI n="setup" /><BigLabel>Model<br />Setup</BigLabel></Big>
          </GroupBody>
          <GroupLabel>설정<Caret /></GroupLabel>
        </Group>
        <Group $w={126}>
          <GroupBody $pad={3}>
            <Big $w={42} $mr={5}><BigI n="regenBig" /><BigLabel $ko>재생성<br /><Caret /></BigLabel></Big>
            <SmallCol $w={70}>{small("copy", "복사", true, true)}{small("paste", "붙여넣기", true, true)}</SmallCol>
          </GroupBody>
          <GroupLabel>작업<Caret /></GroupLabel>
        </Group>
        <Group $w={245}>
          <GroupBody $pad={5}>
            <Big $w={50} $mr={6}><BigI n="force" /><BigLabel>Force/<br />Moment</BigLabel></Big>
            <SmallCol $w={97}>{small("pressure", "Pressure")}{small("bearing", "Bearing")}{small("temperature", "Temperature")}</SmallCol>
            <SmallCol $w={80}>{small("gravity", "Gravity")}{small("centrifugal", "Centrifugal")}{small("preload", "Preload")}</SmallCol>
          </GroupBody>
          <GroupLabel>하중<Caret /></GroupLabel>
        </Group>
        <Group $w={148}>
          <GroupBody $pad={4}>
            <Big $w={78} $mr={5}><BigI n="displacement" /><BigLabel>Displacement</BigLabel></Big>
            <SmallCol $w={55}>{small("planar", "Planar")}{small("pin", "Pin")}{small("ball", "Ball")}</SmallCol>
          </GroupBody>
          <GroupLabel>제약 조건<Caret /></GroupLabel>
        </Group>
        <Group $w={150}>
          <GroupBody $pad={7}>
            <SmallCol $w={140}>{small("tag", "Materials")}{small("tagAssign", "Material Assignment")}{small("tagOrient", "Material Orientations")}</SmallCol>
          </GroupBody>
          <GroupLabel>재료</GroupLabel>
        </Group>
        <Group $w={168}>
          <GroupBody $pad={4}>
            <Big $w={68} $mr={6}><BigI n="analyses" /><BigLabel>Analyses<br />and Studies</BigLabel></Big>
            <SmallCol $w={85}>{small("measures", "Measures")}{small("results", "Results")}{small("diagnostics", "Diagnostics", true)}</SmallCol>
          </GroupBody>
          <GroupLabel>실행</GroupLabel>
        </Group>
        <Group $w={51}>
          <GroupBody $pad={0}>
            <Big $w={50} $top={12}><I n="closeRed" w={26} h={24} v="0 0 26 24" /><BigLabel $ko>닫기</BigLabel></Big>
          </GroupBody>
          <GroupLabel>닫기</GroupLabel>
        </Group>
      </Ribbon>

      <Workspace>
        <Side>
          <SideTabs>
            <SideTab $active><I n="tree" /></SideTab><SideTab $w={30}><I n="folders" /></SideTab><SideTab $w={34}><I n="favs" /></SideTab>
          </SideTabs>
          <SideTools>
            <Slot $w={15}><I n="green" s={14} /></Slot>
            <Slot $w={14}><svg width="3" height="16"><path d="M1.500 1v15" stroke="#c5c8ca" strokeWidth="2" strokeDasharray="2 2" /></svg></Slot>
            <Slot $w={40}><I n="listA" /></Slot><Slot $w={14} $start><I n="listB" /></Slot><Slot $w={3} />
            <Pressed><I n="columns" /></Pressed><VLine $h={23} $m={4} />
            <Slot $w={22}><I n="treeFilter" /></Slot><Slot $w={27}><I n="colSheet" /></Slot><VLine $h={23} $m={4} />
            <Slot $w={22}><I n="sheet" /></Slot>
            <Slot $w={41}><svg width="9" height="8"><path d="M1 1l3 3-3 3M5 1l3 3-3 3" fill="none" stroke="#4a4d4f" strokeWidth="1.300" /></svg></Slot>
            <I n="report" />
          </SideTools>
          <FilterRow>
            <I n="funnel" w={17} h={16} />
            <FilterInput><svg width="9" height="9"><path d="M1 1l7 7M8 1L1 8" stroke="#aaadae" strokeWidth="1.300" /></svg></FilterInput>
            <Caret w={7} />
            <Slot $w={34}><svg width="11" height="11"><path d="M5.500 0v11M0 5.500h11" stroke="#9da1a2" strokeWidth="2.600" /></svg></Slot>
          </FilterRow>
          <Tree>
            <Row $x={10} $ls={-0.15}><Slot $w={21} $start><I n="part" /></Slot>FRAMEWORK_CANTILEVER_SIMULATE.PRT</Row>
            <Row $x={15} $ko><Slot $w={15} $start><Tri /></Slot><Slot $w={21} $start><I n="sheet" /></Slot>설계 항목</Row>
            <Row $x={30} $dim><Slot $w={21} $start><I n="plane" /></Slot>RIGHT</Row>
            <Row $x={30} $dim $ls={-0.1}><Slot $w={21} $start><I n="plane" /></Slot>TOP</Row>
            <Row $x={30} $dim $ls={-0.1}><Slot $w={21} $start><I n="plane" /></Slot>FRONT</Row>
            <Row $x={30} $ls={-0.15}><Slot $w={21} $start><I n="csys" /></Slot>PRT_CSYS_DEF</Row>
            <Row $x={30} $ko><Slot $w={21} $start><I n="sketch" /></Slot>스케치 1</Row>
            <Insert />
            <Row $x={15}><Slot $w={15} $start><Tri /></Slot><Slot $w={21} $start><I n="loads" /></Slot>Loads/Constraints</Row>
            <Row $x={14}><Slot $w={16} $start><Tri open /></Slot><Slot $w={21} $start><I n="ideal" /></Slot>Idealizations</Row>
            <Row $x={34}><Slot $w={16} $start><Tri open /></Slot><Slot $w={21} $start><I n="truss" /></Slot>Beams</Row>
            {["Beam1", "Beam2", "Beam3"].map(b => <Row key={b} $x={70}><Slot $w={21} $start><I n="truss" /></Slot>{b}</Row>)}
            <Row $x={15}><Slot $w={15} $start><Tri /></Slot><Slot $w={21} $start><I n="tag" /></Slot>Properties</Row>
          </Tree>
          <HScroll><ScrollBtn><Tri left /></ScrollBtn><Thumb /><ScrollBtn><Tri /></ScrollBtn></HScroll>
        </Side>

        <Canvas>
          <Scene width="1078" height="798" viewBox="272 168 1078 798"><Model /></Scene>
          <ViewBar>
            {["zoomFit", "zoomIn", "zoomOut", "repaint", "shade", "box", "orient", "viewMgr", "persp", "section", "datum", "anno", "spin", "simView"].map(n =>
              <ViewBtn key={n} $active={n === "anno"}><I n={n} /></ViewBtn>)}
          </ViewBar>
          <ModeText>구조 : 3D : 원본 모드 : 기본값 결합된 인터페이스</ModeText>
          <Tolerance>
            <ToleranceRow $pad={10}>X.X+-0.1</ToleranceRow><ToleranceRow $pad={5}>X.XX+-0.01</ToleranceRow>
            <ToleranceRow $pad={0}>X.XXX+-0.001</ToleranceRow><ToleranceRow $pad={5}>ANG.+-0.5</ToleranceRow>
          </Tolerance>
          <Compass>
            <svg width="105" height="117" fontFamily="Liberation Sans, sans-serif" fontSize="17" fill="#2c1a6e">
              <g fill="none" stroke="#76609c" strokeWidth=".9">
                <path d="M53 70L48 25M53 70L92 82M53 70L20 91" />
                <path d="M35 60l18-9 17 8v18l-17 9-18-9zM35 60l17 8 18-9M52 68v18M35 77l18-8 17 8" stroke="#8a86a6" />
              </g>
              <text x="3" y="16" letterSpacing="-.4">WCS</text><text x="41" y="24">Y</text><text x="8" y="100">Z</text><text x="92" y="91">X</text>
            </svg>
          </Compass>

          <Dialog>
            <DialogTitle><span>Force/Moment Load</span><svg width="10" height="10"><path d="M1.500 0.500l7 7M8.500 0.500l-7 7" stroke="#9c9ea0" strokeWidth="2.200" /></svg></DialogTitle>
            <Section $h={44}><legend>Name</legend>
              <Line $h={25} $gap={3} $a="flex-start"><Input $w={339}>Load1</Input><Button $w={33} $h={20}><I n="orange" /></Button></Line>
            </Section>
            <Section $h={45}><legend>Member of Set</legend>
              <Line $h={26} $gap={2}><Combo w={320}>LoadSet1</Combo><Button $w={53}>New...</Button></Line>
            </Section>
            <Section $h={142}><legend>References</legend>
              <Line $h={25}><Combo w={375}>Points</Combo></Line>
              <Line $h={21} $pt={4}><Label $w={43.5}>Points :</Label>
                <Radio $on /><RadioText $w={46}>Single</RadioText><Radio /><RadioText $w={54}>Feature</RadioText>
                <Radio /><RadioText $w={53}>Pattern</RadioText><Radio /><RadioText $w={45}>Intent</RadioText><Radio /><RadioText $w={70}>Lattice Set</RadioText></Line>
              <List>Vertex (CurveStart)</List>
            </Section>
            <Section $h={65}><legend>Properties</legend>
              <Line $h={21} $pt={4}><Label $w={109.500}>Coordinate System:</Label><Radio $on /><RadioText $w={43}>World</RadioText><Radio /><RadioText $w={60}>Selected</RadioText></Line>
              <Line $h={26} $gap={6}><Input $w={274} $wcs><Slot $w={24}><I n="wcs" /></Slot>WCS</Input><Button $w={95}>Advanced &gt;&gt;</Button></Line>
            </Section>
            <Two>
              <Section $h={150} $w="191px" $r><legend>Force</legend>
                <Line $h={27} $a="flex-start"><Combo w={185}>Components</Combo></Line>
                {[["X", "0"], ["Y", "-500"], ["Z", "0"]].map(([a, v]) => <Line key={a} $h={26.5}><AxisName>{a}</AxisName><Input $w={140}>{v}</Input></Line>)}
                <Line $h={25}><Combo w={185}>N</Combo></Line>
              </Section>
              <Section $h={150} $ml={-1} $w="191px"><legend>Moment</legend>
                <Line $h={27} $a="flex-start"><Combo w={185}>Components</Combo></Line>
                {["X", "Y", "Z"].map(a => <Line key={a} $h={26.5}><AxisName>{a}</AxisName><Input $w={140}>0</Input></Line>)}
                <Line $h={25}><Combo w={185}>mm N</Combo></Line>
              </Section>
            </Two>
            <Footer><Button $w={62}>Preview</Button><Button $w={57}>OK</Button><Button $w={56}>Cancel</Button></Footer>
          </Dialog>
        </Canvas>
      </Workspace>

      <Status>
        <Pressed $w={22}><I n="navPane" /></Pressed><Slot $w={27}><I n="browser" /></Slot><Slot $w={26}><I n="blank" /></Slot>
        <VLine $t={2} $h={24} $c="#dcdee0" $m={4} />
        <Slot $w={13} $start><I n="arrow" s={14} v="0 0 14 15" /></Slot>
        <StatusMsg>Select geometrical references.</StatusMsg>
        <VLine $t={1} $h={24} $m={2} /><Slot $w={30}><I n="binoc" s={17} /></Slot><Slot $w={10}><Caret w={7} /></Slot><VLine $h={24} $m={4} />
        <KoText $w={98} $pad={1}>1개 선택됨</KoText>
        <ComboBox $w={184}><KoText as="span">모두</KoText><i><Caret /></i></ComboBox>
      </Status>
    </Window>
  );
}
